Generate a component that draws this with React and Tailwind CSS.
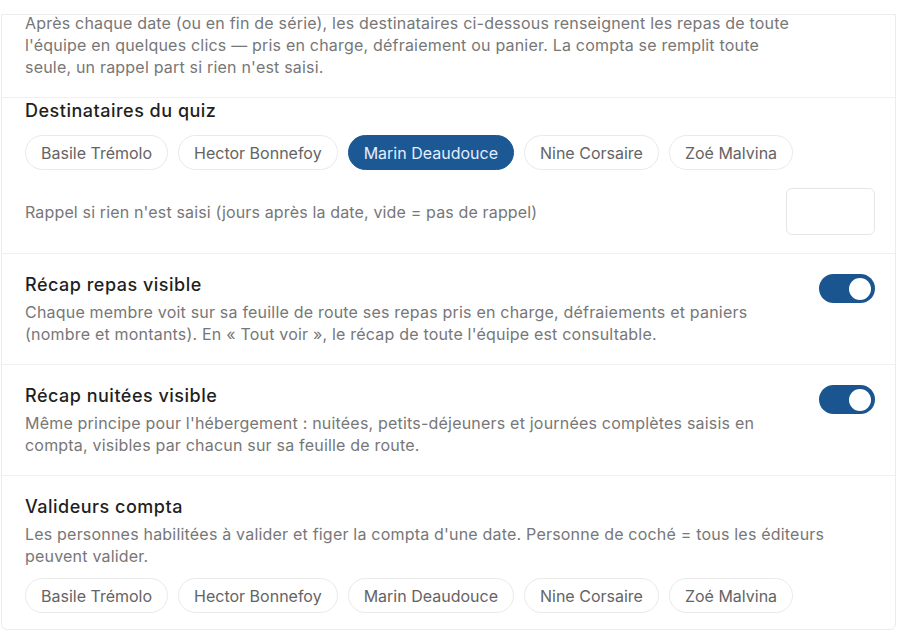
import { useState } from 'react'

const team = ['Basile Trémolo', 'Hector Bonnefoy', 'Marin Deaudouce', 'Nine Corsaire', 'Zoé Malvina']

function Chips({ selected = [], onToggle }) {
  return (
    <div className="flex flex-wrap gap-[10px]">
      {team.map((name) => {
        const on = selected.includes(name)
        return (
          <button
            key={name}
            onClick={() => onToggle(name)}
            className={
              on
                ? 'h-[35px] rounded-full border border-[#1b5894] bg-[#1b5894] px-[15px] text-[16px] text-[#e3eeff]'
                : 'h-[35px] rounded-full border border-[#e9e9e9] bg-white px-[15px] text-[16px] text-[#646464]'
            }
          >
            {name}
          </button>
        )
      })}
    </div>
  )
}

function Toggle({ on, onChange }) {
  return (
    <button
      onClick={() => onChange(!on)}
      className={
        on
          ? 'flex h-[29px] w-[56px] shrink-0 items-center justify-end rounded-full bg-[#1b5590] px-[4px]'
          : 'flex h-[29px] w-[56px] shrink-0 items-center justify-start rounded-full bg-[#d4d4d4] px-[4px]'
      }
    >
      <span className="h-[22px] w-[22px] rounded-full bg-white" />
    </button>
  )
}

export default function App() {
  const [quiz, setQuiz] = useState(['Marin Deaudouce'])
  const [validators, setValidators] = useState([])
  const [repas, setRepas] = useState(true)
  const [nuitees, setNuitees] = useState(true)

  const toggleIn = (list, setList) => (name) =>
    setList(list.includes(name) ? list.filter((n) => n !== name) : [...list, name])

  return (
    <div className="min-h-screen bg-white pt-[14px] pr-[4px] pl-[1px]" style={{ fontFamily: 'Inter, "Noto Sans", sans-serif' }}>
      <div className="overflow-hidden rounded-b-md border border-[#ececec] bg-white">
        {/* Intro */}
        <div className="border-b border-[#f0f0f0] px-[23px] pb-[19px]">
          <p className="-mt-[3px] max-w-[776px] text-[16px] leading-[22px] tracking-[0.2px] text-[#777]">
            Après chaque date (ou en fin de série), les destinataires ci-dessous renseignent les repas de toute l'équipe en quelques clics — pris en charge, défraiement ou panier. La compta se remplit toute seule, un rappel part si rien n'est saisi.
          </p>
        </div>

        {/* Quiz recipients */}
        <div className="border-b border-[#f0f0f0] px-[23px] pt-[1px] pb-[18px]">
          <h3 className="text-[18px] leading-[24px] font-medium tracking-[0.5px] text-[#1f1f1f]">Destinataires du quiz</h3>
          <div className="mt-[12px]">
            <Chips selected={quiz} onToggle={toggleIn(quiz, setQuiz)} />
          </div>
          <div className="mt-[18px] flex items-center justify-between">
            <span className="text-[16px] tracking-[0.15px] text-[#777]">Rappel si rien n'est saisi (jours après la date, vide = pas de rappel)</span>
            <input className="mr-[-3px] h-[47px] w-[89px] rounded-md border border-[#e6e6e6] px-2 text-[15px] outline-none" />
          </div>
        </div>

        {/* Meals recap */}
        <div className="flex items-start gap-[40px] border-b border-[#f0f0f0] px-[23px] pt-[19px] pb-[19px]">
          <div className="flex-1">
            <h3 className="text-[18px] leading-[24px] font-medium tracking-[0.5px] text-[#1f1f1f]">Récap repas visible</h3>
            <p className="mt-[4px] text-[16px] leading-[22px] tracking-[0.2px] text-[#777]">
              Chaque membre voit sur sa feuille de route ses repas pris en charge, défraiements et paniers (nombre et montants). En « Tout voir », le récap de toute l'équipe est consultable.
            </p>
          </div>
          <div className="mt-[1px] mr-[-3px]">
            <Toggle on={repas} onChange={setRepas} />
          </div>
        </div>

        {/* Nights recap */}
        <div className="flex items-start gap-[40px] border-b border-[#f0f0f0] px-[23px] pt-[19px] pb-[19px]">
          <div className="flex-1">
            <h3 className="text-[18px] leading-[24px] font-medium tracking-[0.5px] text-[#1f1f1f]">Récap nuitées visible</h3>
            <p className="mt-[4px] text-[16px] leading-[22px] tracking-[0.2px] text-[#777]">
              Même principe pour l'hébergement : nuitées, petits-déjeuners et journées complètes saisis en compta, visibles par chacun sur sa feuille de route.
            </p>
          </div>
          <div className="mt-[1px] mr-[-3px]">
            <Toggle on={nuitees} onChange={setNuitees} />
          </div>
        </div>

        {/* Accounting validators */}
        <div className="px-[23px] pt-[19px] pb-[16px]">
          <h3 className="text-[18px] leading-[24px] font-medium tracking-[0.5px] text-[#1f1f1f]">Valideurs compta</h3>
          <p className="mt-[4px] text-[16px] leading-[22px] tracking-[0.2px] text-[#777]">
            Les personnes habilitées à valider et figer la compta d'une date. Personne de coché = tous les éditeurs peuvent valider.
          </p>
          <div className="mt-[11px]">
            <Chips selected={validators} onToggle={toggleIn(validators, setValidators)} />
          </div>
        </div>
      </div>
    </div>
  )
}
